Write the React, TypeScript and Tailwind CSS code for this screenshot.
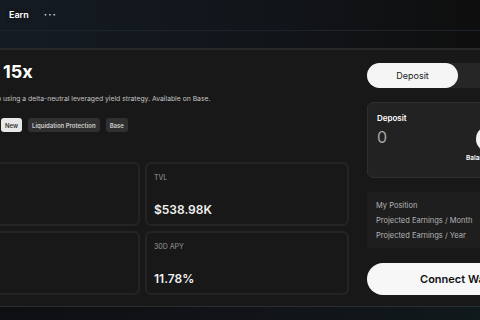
import React from "react";

const tags = [
  { label: "New", active: true },
  { label: "Liquidation Protection", active: false },
  { label: "Base", active: false },
];

const stats = [
  { label: "", value: "" },
  { label: "TVL", value: "$538.98K" },
  { label: "", value: "" },
  { label: "30D APY", value: "11.78%" },
];

function StatCard({ label, value }: { label: string; value: string }) {
  return (
    <div className="h-[64px] rounded-[6px] border-2 border-[#242424] bg-[#181818] px-[7px] pt-[10px]">
      <div className="h-[8px] text-[7px] leading-[8px] text-[#9a9a9a]">{label}</div>
      <div className="mt-[21px] text-[12px] leading-[14px] font-semibold text-[#f2f2f2]">
        {value}
      </div>
    </div>
  );
}

export default function App() {
  return (
    <div className="w-[480px] h-[320px] overflow-hidden bg-[#0d0f12] font-['Inter',sans-serif]">
      <header className="h-[48px] bg-gradient-to-r from-[#151b23] via-[#12161b] to-[#0e0e0e]">
        <div className="h-[31px] flex items-center border-b border-[#1d232a] pl-[6px]">
          <div className="px-[3px] py-[3px] rounded-[3px] bg-[#141920] text-[9px] leading-[10px] font-semibold text-white">
            Earn
          </div>
          <div className="ml-[12px] text-[10px] leading-[10px] font-bold text-[#d0d4da] tracking-[1px] -mt-[3px]">
            ···
          </div>
        </div>
      </header>

      <main className="h-[258px] border-t-2 border-[#28282b] bg-[#181818] flex gap-[18px] pt-[13px]">
        <section className="w-[349px] shrink-0">
          <h1 className="pl-[3px] text-[18px] leading-[18px] font-bold text-white">15x</h1>
          <p className="mt-[13px] -ml-[3px] text-[6.8px] leading-[10px] whitespace-nowrap text-[#c4c4c4]">
            o using a delta-neutral leveraged yield strategy. Available on Base.
          </p>
          <div className="mt-[14px] flex gap-[6px] pl-[1px]">
            {tags.map((t) => (
              <span
                key={t.label}
                className={
                  t.active
                    ? "h-[14px] px-[4px] flex items-center rounded-[3px] bg-[#e8e8e8] text-[6px] font-semibold text-[#333]"
                    : "h-[14px] px-[4px] flex items-center rounded-[3px] bg-[#303030] text-[6px] font-semibold text-[#cfcfcf]"
                }
              >
                {t.label}
              </span>
            ))}
          </div>
          <div className="mt-[30px] -ml-[64px] grid grid-cols-2 gap-[5px]">
            {stats.map((s, i) => (
              <StatCard key={i} label={s.label} value={s.value} />
            ))}
          </div>
        </section>

        <aside className="w-[198px] shrink-0">
          <div className="h-[25px] flex rounded-full bg-[#262626]">
            <div className="w-[91px] rounded-full bg-[#f5f5f5] flex items-center justify-center text-[9px] text-[#222]">
              Deposit
            </div>
            <div className="flex-1 flex items-center justify-center text-[9px] text-[#bbb]">
              Withdraw
            </div>
          </div>

          <div className="mt-[14px] h-[76px] rounded-[6px] border border-[#2e2e2e] bg-[#222222] px-[9px] pt-[10px] flex justify-between">
            <div>
              <div className="text-[8px] leading-[10px] font-semibold text-white">Deposit</div>
              <div className="mt-[5px] text-[16px] leading-[18px] text-[#a8a8a8]">0</div>
            </div>
            <div className="w-[30px] flex flex-col items-start mt-[13px] mr-[59px]">
              <div className="ml-[10px] w-[26px] h-[26px] rounded-full bg-[#f4f4f4]" />
              <div className="mt-[2px] text-[6.5px] leading-[8px] font-semibold text-white">Balance</div>
            </div>
          </div>

          <div className="mt-[14px] h-[56px] rounded-[4px] bg-[#1e1e1e] px-[9px] pt-[9px] flex flex-col gap-[6px] text-[7.5px] leading-[9px] text-[#b4b4b4]">
            <div>My Position</div>
            <div>Projected Earnings / Month</div>
            <div>Projected Earnings / Year</div>
          </div>

          <button className="mt-[15px] w-[187px] h-[32px] rounded-full bg-[#f7f7f7] text-[11px] font-semibold text-[#111]">
            Connect Wallet
          </button>
        </aside>
      </main>

      <footer className="h-[14px] border-t border-[#2a2d31] bg-gradient-to-r from-[#0e0f12] via-[#111318] to-[#10191b]" />
    </div>
  );
}
